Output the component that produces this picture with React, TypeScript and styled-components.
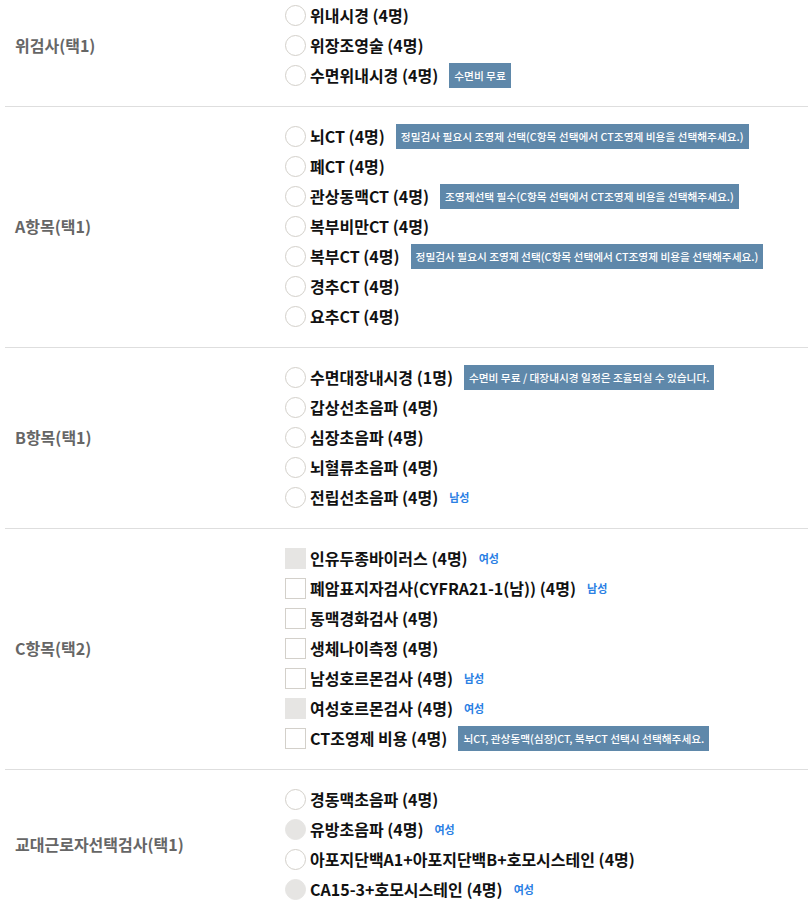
import React from "react";
import styled, { createGlobalStyle } from "styled-components";

const Global = createGlobalStyle`
  html, body { margin: 0; padding: 0; background: #fff; }
  body { font-family: "Noto Sans CJK KR", "Noto Sans", sans-serif; }
`;

type Kind = "radio" | "check";
type Opt = { text: string; disabled?: boolean; note?: string; gender?: string };
type Group = { title: string; kind: Kind; options: Opt[] };

const groups: Group[] = [
  {
    title: "위검사(택1)",
    kind: "radio",
    options: [
      { text: "위내시경 (4명)" },
      { text: "위장조영술 (4명)" },
      { text: "수면위내시경 (4명)", note: "수면비 무료" },
    ],
  },
  {
    title: "A항목(택1)",
    kind: "radio",
    options: [
      { text: "뇌CT (4명)", note: "정밀검사 필요시 조영제 선택(C항목 선택에서 CT조영제 비용을 선택해주세요.)" },
      { text: "폐CT (4명)" },
      { text: "관상동맥CT (4명)", note: "조영제선택 필수(C항목 선택에서 CT조영제 비용을 선택해주세요.)" },
      { text: "복부비만CT (4명)" },
      { text: "복부CT (4명)", note: "정밀검사 필요시 조영제 선택(C항목 선택에서 CT조영제 비용을 선택해주세요.)" },
      { text: "경추CT (4명)" },
      { text: "요추CT (4명)" },
    ],
  },
  {
    title: "B항목(택1)",
    kind: "radio",
    options: [
      { text: "수면대장내시경 (1명)", note: "수면비 무료 / 대장내시경 일정은 조율되실 수 있습니다." },
      { text: "갑상선초음파 (4명)" },
      { text: "심장초음파 (4명)" },
      { text: "뇌혈류초음파 (4명)" },
      { text: "전립선초음파 (4명)", gender: "남성" },
    ],
  },
  {
    title: "C항목(택2)",
    kind: "check",
    options: [
      { text: "인유두종바이러스 (4명)", disabled: true, gender: "여성" },
      { text: "폐암표지자검사(CYFRA21-1(남)) (4명)", gender: "남성" },
      { text: "동맥경화검사 (4명)" },
      { text: "생체나이측정 (4명)" },
      { text: "남성호르몬검사 (4명)", gender: "남성" },
      { text: "여성호르몬검사 (4명)", disabled: true, gender: "여성" },
      { text: "CT조영제 비용 (4명)", note: "뇌CT, 관상동맥(심장)CT, 복부CT 선택시 선택해주세요." },
    ],
  },
  {
    title: "교대근로자선택검사(택1)",
    kind: "radio",
    options: [
      { text: "경동맥초음파 (4명)" },
      { text: "유방초음파 (4명)", disabled: true, gender: "여성" },
      { text: "아포지단백A1+아포지단백B+호모시스테인 (4명)" },
      { text: "CA15-3+호모시스테인 (4명)", disabled: true, gender: "여성" },
    ],
  },
];

const Page = styled.div`
  margin-left: 5px;
`;

const Section = styled.section<{ $first?: boolean }>`
  display: grid;
  grid-template-columns: 280px 1fr;
  align-items: center;
  padding: ${(p) => (p.$first ? "0" : "14px")} 0 16px;
  border-bottom: 1px solid #dedede;
`;

const Title = styled.div`
  padding-left: 10px;
  font-size: 16px;
  font-weight: 700;
  color: #666;
`;

const List = styled.div`
  display: flex;
  flex-direction: column;
`;

const Row = styled.label`
  display: flex;
  align-items: center;
  height: 30px;
  white-space: nowrap;
`;

const Marker = styled.span<{ $kind: Kind; $disabled?: boolean }>`
  flex: none;
  box-sizing: border-box;
  width: 21px;
  height: 21px;
  margin-right: 4px;
  border-radius: ${(p) => (p.$kind === "radio" ? "50%" : "0")};
  border: 1px solid ${(p) => (p.$disabled ? "#e6e5e3" : "#d3d0ca")};
  background: ${(p) => (p.$disabled ? "#e6e5e3" : "#fff")};
`;

const Text = styled.span`
  font-size: 16px;
  font-weight: 700;
  color: #111;
`;

const Note = styled.span`
  display: inline-flex;
  align-items: center;
  height: 25px;
  margin-left: 11px;
  padding: 0 5px;
  background: #5f88aa;
  color: #fff;
  font-size: 10.7px;
  font-weight: 500;
`;

const Gender = styled.span`
  margin-left: 11px;
  font-size: 11px;
  font-weight: 700;
  color: #2a80e4;
`;

export default function App() {
  return (
    <Page>
      <Global />
      {groups.map((g, i) => (
        <Section key={g.title} $first={i === 0}>
          <Title>{g.title}</Title>
          <List>
            {g.options.map((o) => (
              <Row key={o.text}>
                <Marker $kind={g.kind} $disabled={o.disabled} />
                <Text>{o.text}</Text>
                {o.note && <Note>{o.note}</Note>}
                {o.gender && <Gender>{o.gender}</Gender>}
              </Row>
            ))}
          </List>
        </Section>
      ))}
    </Page>
  );
}
